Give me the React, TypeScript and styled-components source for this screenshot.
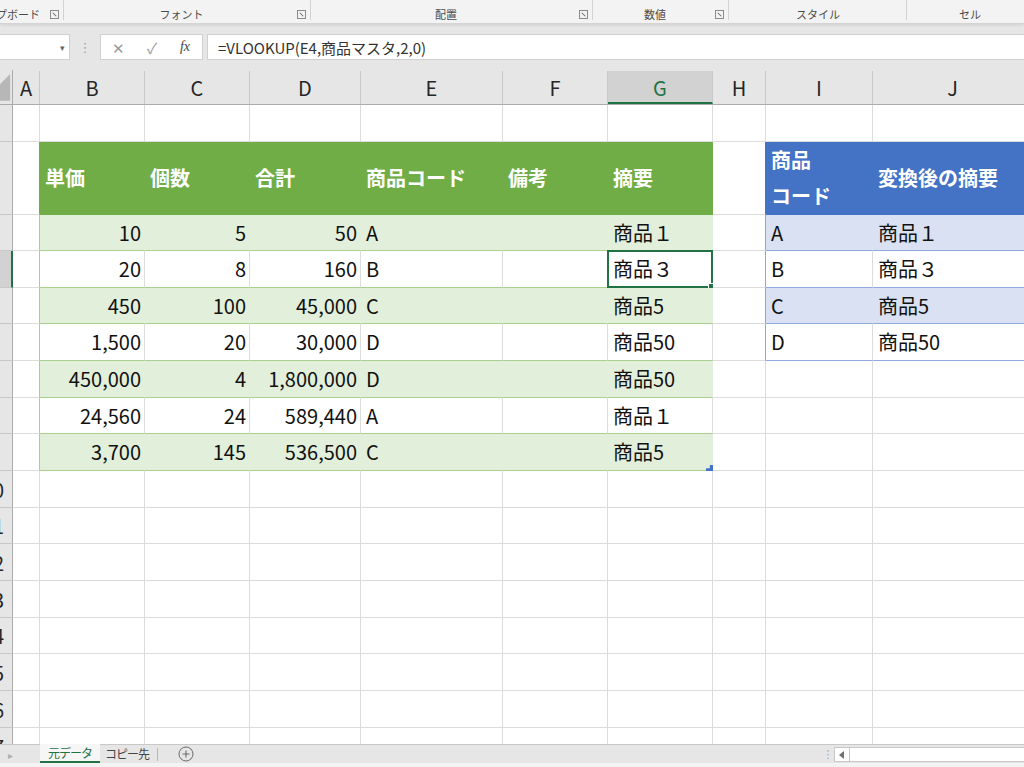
import React from 'react'
import styled, { createGlobalStyle, css } from 'styled-components'

const GlobalStyle = createGlobalStyle`
  html, body {
    margin: 0;
    padding: 0;
    background: #ffffff;
  }
  body {
    font-family: "Noto Sans CJK JP", "Noto Sans", sans-serif;
  }
`

type Kind = 'blank' | 'gHead' | 'gBand' | 'gPlain' | 'bHead' | 'bBand' | 'bPlain'

interface CellSpec {
  text?: string
  kind: Kind
  right?: boolean
  edge?: string
  selected?: boolean
  corner?: boolean
}

const COLS = [
  { key: 'A', w: 27 },
  { key: 'B', w: 105 },
  { key: 'C', w: 105 },
  { key: 'D', w: 111 },
  { key: 'E', w: 142 },
  { key: 'F', w: 105 },
  { key: 'G', w: 105 },
  { key: 'H', w: 53 },
  { key: 'I', w: 107 },
  { key: 'J', w: 160 },
]

const ROW_HEIGHTS = [37, 73, 36, 37, 36, 37, 37, 36, 37, 37, 36, 37, 37, 36, 37, 37, 37]

const GREEN_HEAD = ['単価', '個数', '合計', '商品コード', '備考', '摘要']
const GREEN_ROWS = [
  ['10', '5', '50', 'A', '', '商品１'],
  ['20', '8', '160', 'B', '', '商品３'],
  ['450', '100', '45,000', 'C', '', '商品5'],
  ['1,500', '20', '30,000', 'D', '', '商品50'],
  ['450,000', '4', '1,800,000', 'D', '', '商品50'],
  ['24,560', '24', '589,440', 'A', '', '商品１'],
  ['3,700', '145', '536,500', 'C', '', '商品5'],
]
const BLUE_HEAD = ['商品\nコード', '変換後の摘要']
const BLUE_ROWS = [
  ['A', '商品１'],
  ['B', '商品３'],
  ['C', '商品5'],
  ['D', '商品50'],
]

const buildRow = (r: number): CellSpec[] =>
  COLS.map((_, c) => {
    if (c === 0) {
      if (r >= 2 && r <= 9) return { kind: 'blank', edge: r === 2 ? '#70ad47' : '#a9d08e' }
      return { kind: 'blank' }
    }
    if (c >= 1 && c <= 6 && r >= 2 && r <= 9) {
      if (r === 2) return { kind: 'gHead', text: GREEN_HEAD[c - 1] }
      return {
        kind: (r - 3) % 2 === 0 ? 'gBand' : 'gPlain',
        text: GREEN_ROWS[r - 3][c - 1],
        right: c <= 3,
        selected: r === 4 && c === 6,
        corner: r === 9 && c === 6,
      }
    }
    if (c === 7) {
      if (r >= 2 && r <= 6) return { kind: 'blank', edge: r === 2 ? '#4472c4' : '#8ea9db' }
      return { kind: 'blank' }
    }
    if (c >= 8 && r >= 2 && r <= 6) {
      if (r === 2) return { kind: 'bHead', text: BLUE_HEAD[c - 8] }
      return { kind: (r - 3) % 2 === 0 ? 'bBand' : 'bPlain', text: BLUE_ROWS[r - 3][c - 8] }
    }
    return { kind: 'blank' }
  })

const KIND_STYLE: Record<Kind, { bg: string; br: string; bb: string; color: string; bold?: boolean }> = {
  blank: { bg: '#ffffff', br: '#dcdcdc', bb: '#dcdcdc', color: '#111' },
  gHead: { bg: '#70ad47', br: '#70ad47', bb: '#70ad47', color: '#ffffff', bold: true },
  gBand: { bg: '#e2efda', br: '#e2efda', bb: '#a9d08e', color: '#111' },
  gPlain: { bg: '#ffffff', br: '#dcdcdc', bb: '#a9d08e', color: '#111' },
  bHead: { bg: '#4472c4', br: '#4472c4', bb: '#4472c4', color: '#ffffff', bold: true },
  bBand: { bg: '#d9e1f2', br: '#d9e1f2', bb: '#8ea9db', color: '#111' },
  bPlain: { bg: '#ffffff', br: '#dcdcdc', bb: '#8ea9db', color: '#111' },
}

const App: React.FC = () => {
  return (
    <>
      <GlobalStyle />
      <Window>
        <Ribbon>
          <Group $w={64} $clip>
            <GroupLabel>クリップボード</GroupLabel>
            <Launcher />
          </Group>
          <Group $w={247} $launch>
            <GroupLabel>フォント</GroupLabel>
            <Launcher />
          </Group>
          <Group $w={282} $launch>
            <GroupLabel>配置</GroupLabel>
            <Launcher />
          </Group>
          <Group $w={136} $launch>
            <GroupLabel>数値</GroupLabel>
            <Launcher />
          </Group>
          <Group $w={178}>
            <GroupLabel>スタイル</GroupLabel>
          </Group>
          <Group $w={126}>
            <GroupLabel>セル</GroupLabel>
          </Group>
        </Ribbon>

        <FormulaArea>
          <NameBox>
            <DropArrow>▾</DropArrow>
          </NameBox>
          <Grip>⋮</Grip>
          <FxBox>
            <FxIcon $muted>✕</FxIcon>
            <FxIcon $muted>✓</FxIcon>
            <FxIcon $serif>fx</FxIcon>
          </FxBox>
          <FormulaInput>=VLOOKUP(E4,商品マスタ,2,0)</FormulaInput>
        </FormulaArea>

        <Sheet>
          <HeaderRow>
            <Corner>
              <svg width="13" height="34" viewBox="0 0 13 34">
                <polygon points="11,3 11,32 0,32 0,14" fill="#b7b7b7" />
              </svg>
            </Corner>
            {COLS.map((col) => (
              <ColHead key={col.key} $w={col.w} $active={col.key === 'G'}>
                {col.key}
              </ColHead>
            ))}
          </HeaderRow>

          {ROW_HEIGHTS.map((h, i) => {
            const r = i + 1
            const cells = buildRow(r)
            return (
              <SheetRow key={r} $h={h}>
                <RowHead $active={r === 4}>
                  <RowNum>{r}</RowNum>
                </RowHead>
                {cells.map((cell, c) => {
                  const s = KIND_STYLE[cell.kind]
                  return (
                    <Cell
                      key={c}
                      $w={COLS[c].w}
                      $bg={s.bg}
                      $br={cell.edge ?? s.br}
                      $bb={s.bb}
                      $color={s.color}
                      $bold={s.bold}
                      $right={cell.right}
                    >
                      {cell.text}
                      {cell.selected && (
                        <Selection>
                          <FillHandle />
                        </Selection>
                      )}
                      {cell.corner && <ResizeCorner />}
                    </Cell>
                  )
                })}
              </SheetRow>
            )
          })}
        </Sheet>

        <TabBar>
          <NavArrow>▸</NavArrow>
          <Tab $active>元データ</Tab>
          <Tab>コピー先</Tab>
          <TabDivider />
          <AddSheet>
            <svg width="16" height="16" viewBox="0 0 16 16">
              <circle cx="8" cy="8" r="7" fill="none" stroke="#6a6a6a" strokeWidth="1" />
              <path d="M8 4.5v7M4.5 8h7" stroke="#6a6a6a" strokeWidth="1.1" />
            </svg>
          </AddSheet>
          <Spacer />
          <Grip $small>⋮</Grip>
          <HScroll>
            <ScrollBtn>
              <svg width="6" height="8" viewBox="0 0 6 8">
                <polygon points="5,0 5,8 0,4" fill="#707070" />
              </svg>
            </ScrollBtn>
          </HScroll>
        </TabBar>
        <StatusStrip />
      </Window>
    </>
  )
}

const Window = styled.div`
  width: 1024px;
  height: 767px;
  overflow: hidden;
  display: flex;
  flex-direction: column;
  background: #e6e6e6;
`

const Ribbon = styled.div`
  height: 24px;
  flex: none;
  display: flex;
  background: #f3f3f3;
  border-bottom: 1px solid #d4d4d4;
  box-shadow: 0 1px 3px rgba(0, 0, 0, 0.1);
  box-sizing: border-box;
  position: relative;
  z-index: 1;
`

const Group = styled.div<{ $w: number; $launch?: boolean; $clip?: boolean }>`
  position: relative;
  width: ${(p) => p.$w}px;
  flex: none;
  display: flex;
  align-items: flex-end;
  justify-content: ${(p) => (p.$clip ? 'flex-end' : 'center')};
  padding: 0 0 0 ${(p) => (p.$launch ? 4 : 0)}px;
  padding-right: ${(p) => (p.$clip ? 24 : p.$launch ? 16 : 0)}px;
  box-sizing: border-box;
  overflow: hidden;

  &::after {
    content: '';
    position: absolute;
    right: 0;
    top: 0;
    bottom: 3px;
    width: 1px;
    background: #d2d2d2;
  }
`

const GroupLabel = styled.span`
  font-size: 11px;
  line-height: 17px;
  color: #4a4a4a;
  white-space: nowrap;
  flex: none;
`

const Launcher = styled.span`
  position: absolute;
  right: 5px;
  bottom: 4px;
  width: 7px;
  height: 7px;
  border: 1px solid #8a8a8a;

  &::after {
    content: '';
    position: absolute;
    left: 1px;
    top: 3px;
    width: 5px;
    height: 1px;
    background: #6a6a6a;
    transform: rotate(45deg);
  }
`

const FormulaArea = styled.div`
  height: 46px;
  flex: none;
  display: flex;
  padding: 10px 0;
  box-sizing: border-box;
  background: #e6e6e6;
`

const NameBox = styled.div`
  width: 70px;
  flex: none;
  background: #ffffff;
  border: 1px solid #d0d0d0;
  border-left: none;
  display: flex;
  align-items: center;
  justify-content: flex-end;
  padding-right: 4px;
  box-sizing: border-box;
`

const DropArrow = styled.span`
  font-size: 9px;
  color: #666;
`

const Grip = styled.span<{ $small?: boolean }>`
  width: ${(p) => (p.$small ? 12 : 30)}px;
  flex: none;
  display: flex;
  align-items: center;
  justify-content: center;
  color: #a0a0a0;
  font-size: ${(p) => (p.$small ? 11 : 13)}px;
  font-family: "DejaVu Sans", sans-serif;
`

const FxBox = styled.div`
  width: 103px;
  flex: none;
  background: #ffffff;
  border: 1px solid #d0d0d0;
  box-sizing: border-box;
  display: grid;
  grid-template-columns: 34px 34px 32px;
  align-items: center;
  justify-items: center;
`

const FxIcon = styled.span<{ $muted?: boolean; $serif?: boolean }>`
  color: ${(p) => (p.$muted ? '#9a9a9a' : '#444')};
  font-size: ${(p) => (p.$serif ? 14 : 15)}px;
  ${(p) =>
    p.$serif &&
    css`
      font-family: "Liberation Serif", serif;
      font-style: italic;
    `}
`

const FormulaInput = styled.div`
  flex: 1;
  margin-left: 4px;
  background: #ffffff;
  border: 1px solid #d0d0d0;
  border-right: none;
  box-sizing: border-box;
  display: flex;
  align-items: center;
  padding-left: 10px;
  font-size: 15px;
  color: #333;
  white-space: nowrap;
`

const Sheet = styled.div`
  flex: none;
  height: 674px;
  overflow: hidden;
  background: #ffffff;
  display: flex;
  flex-direction: column;
`

const HeaderRow = styled.div`
  height: 35px;
  flex: none;
  display: flex;
  background: #e6e6e6;
  border-bottom: 1px solid #ababab;
  box-sizing: border-box;
`

const Corner = styled.div`
  width: 13px;
  flex: none;
  border-right: 1px solid #ababab;
  box-sizing: border-box;
  display: flex;
  align-items: flex-end;
`

const ColHead = styled.div<{ $w: number; $active?: boolean }>`
  width: ${(p) => p.$w}px;
  flex: none;
  box-sizing: border-box;
  display: flex;
  align-items: center;
  justify-content: center;
  font-size: 20px;
  color: ${(p) => (p.$active ? '#217346' : '#262626')};
  background: ${(p) => (p.$active ? '#d2d2d2' : 'transparent')};
  border-right: 1px solid #c8c8c8;
  border-bottom: ${(p) => (p.$active ? '2px solid #217346' : 'none')};
  padding-top: ${(p) => (p.$active ? 2 : 0)}px;
  margin-top: 1px;
`

const SheetRow = styled.div<{ $h: number }>`
  height: ${(p) => p.$h}px;
  flex: none;
  display: flex;
`

const RowHead = styled.div<{ $active?: boolean }>`
  width: 13px;
  flex: none;
  overflow: hidden;
  display: flex;
  align-items: center;
  box-sizing: border-box;
  background: ${(p) => (p.$active ? '#d2d2d2' : '#e6e6e6')};
  border-right: ${(p) => (p.$active ? '2px solid #217346' : '1px solid #ababab')};
  border-bottom: 1px solid #c8c8c8;
`

const RowNum = styled.span`
  width: 40px;
  flex: none;
  margin-left: -27px;
  text-align: center;
  font-size: 20px;
  color: #262626;
`

const Cell = styled.div<{
  $w: number
  $bg: string
  $br: string
  $bb: string
  $color: string
  $bold?: boolean
  $right?: boolean
}>`
  position: relative;
  width: ${(p) => p.$w}px;
  flex: none;
  box-sizing: border-box;
  display: flex;
  align-items: center;
  justify-content: ${(p) => (p.$right ? 'flex-end' : 'flex-start')};
  padding: 0 3px 0 5px;
  background: ${(p) => p.$bg};
  border-right: 1px solid ${(p) => p.$br};
  border-bottom: 1px solid ${(p) => p.$bb};
  color: ${(p) => p.$color};
  font-size: 20px;
  font-weight: ${(p) => (p.$bold ? 700 : 400)};
  line-height: 36px;
  white-space: pre-line;
`

const Selection = styled.div`
  position: absolute;
  left: -1px;
  top: -1px;
  right: -1px;
  bottom: -1px;
  border: 2px solid #217346;
  pointer-events: none;
`

const FillHandle = styled.span`
  position: absolute;
  right: -4px;
  bottom: -4px;
  width: 5px;
  height: 5px;
  background: #217346;
  border: 1px solid #ffffff;
`

const ResizeCorner = styled.span`
  position: absolute;
  right: -1px;
  bottom: -1px;
  width: 7px;
  height: 6px;
  background: #4472c4;
  clip-path: polygon(100% 0, 100% 100%, 0 100%, 0 55%, 55% 55%, 55% 0);
`

const TabBar = styled.div`
  height: 19px;
  flex: none;
  display: flex;
  align-items: stretch;
  background: #e6e6e6;
  border-top: 1px solid #c8c8c8;
  box-sizing: border-box;
`

const NavArrow = styled.span`
  width: 40px;
  flex: none;
  padding-left: 8px;
  box-sizing: border-box;
  display: flex;
  align-items: center;
  color: #b0b0b0;
  font-size: 10px;
`

const Tab = styled.div<{ $active?: boolean }>`
  display: flex;
  align-items: center;
  padding: 0 ${(p) => (p.$active ? 8 : 5)}px;
  font-size: 12px;
  letter-spacing: -1px;
  color: ${(p) => (p.$active ? '#217346' : '#444')};
  background: ${(p) => (p.$active ? '#f6f6f6' : 'transparent')};
  border-bottom: ${(p) => (p.$active ? '2px solid #217346' : 'none')};
  box-sizing: border-box;
  margin-top: -1px;
`

const TabDivider = styled.span`
  width: 1px;
  margin: 3px 0 2px 3px;
  background: #b8b8b8;
`

const AddSheet = styled.span`
  width: 56px;
  flex: none;
  display: flex;
  align-items: center;
  justify-content: center;
`

const Spacer = styled.div`
  flex: 1;
`

const HScroll = styled.div`
  width: 190px;
  flex: none;
  margin: 2px 0 1px;
  background: #ffffff;
  border: 1px solid #c8c8c8;
  border-right: none;
  box-sizing: border-box;
  display: flex;
`

const ScrollBtn = styled.span`
  width: 14px;
  flex: none;
  border-right: 1px solid #c8c8c8;
  display: flex;
  align-items: center;
  justify-content: center;
`

const StatusStrip = styled.div`
  flex: 1;
  background: #f3f3f3;
`

export default App
